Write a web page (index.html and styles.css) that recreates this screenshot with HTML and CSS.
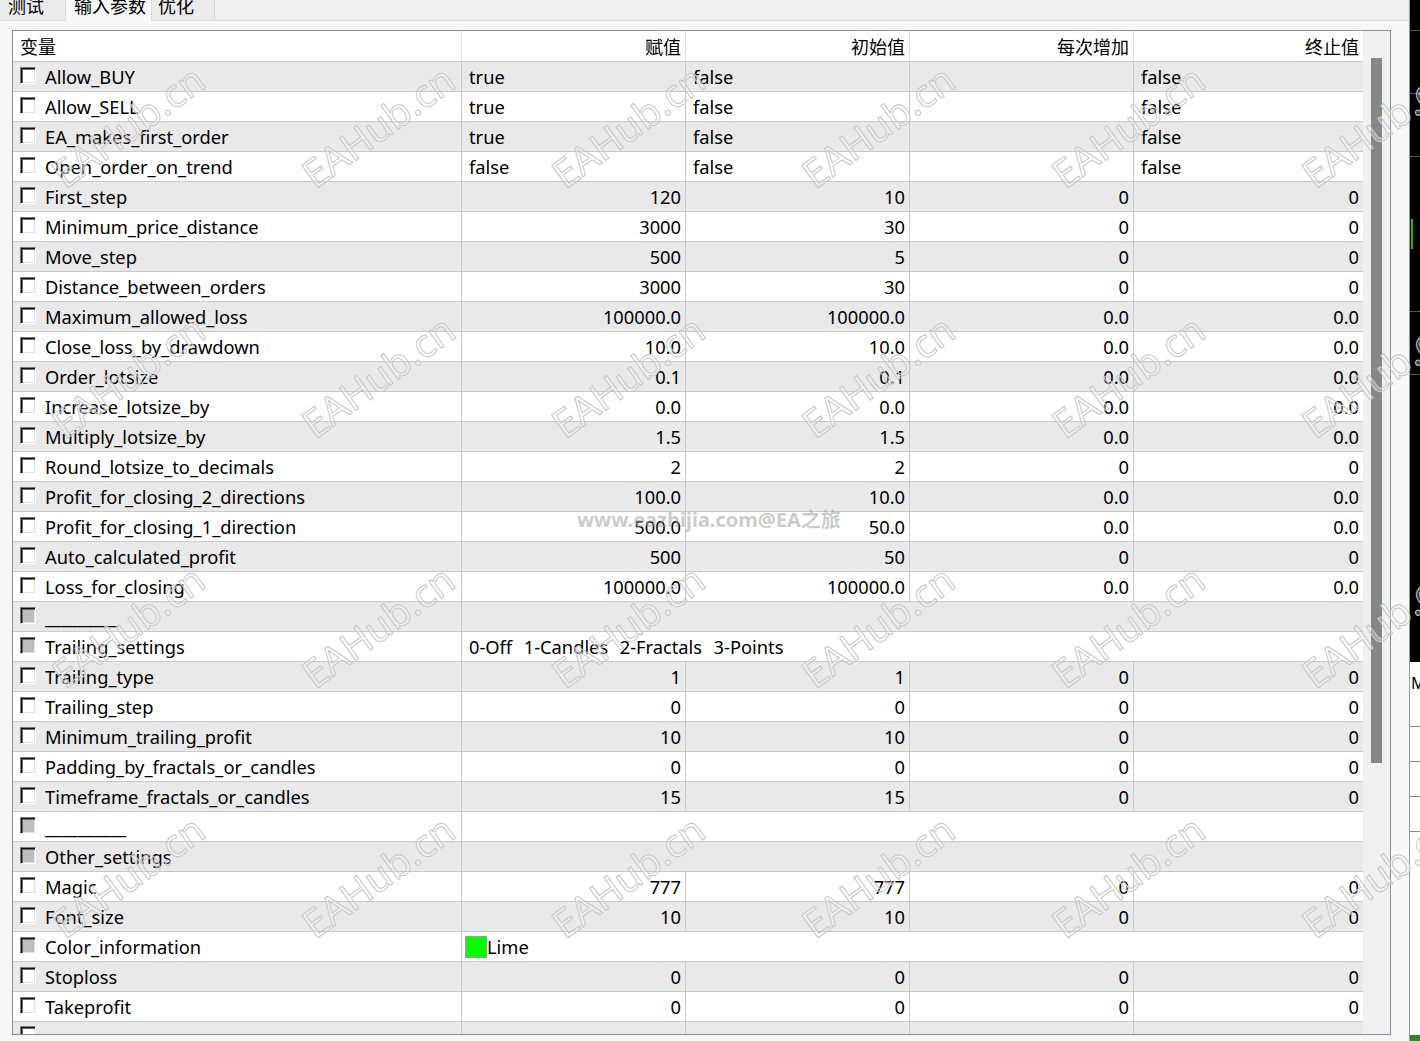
FILE: index.html
```html
<!DOCTYPE html>
<html lang="zh-CN">
<head>
<meta charset="utf-8">
<title>输入参数</title>
<link rel="stylesheet" href="styles.css">
</head>
<body>
<div class="main">
  <div class="tabs">
    <div class="tab tab-test">测试</div>
    <div class="tab tab-inputs active">输入参数</div>
    <div class="tab tab-opt">优化</div>
  </div>
  <div class="panel">
    <div class="listbox">
      <div class="table">
        <div class="row head">
          <div class="cell">变量</div>
          <div class="cell num">赋值</div>
          <div class="cell num">初始值</div>
          <div class="cell num">每次增加</div>
          <div class="cell num last">终止值</div>
        </div>
        <div class="rows">
          <div class="row"><div class="cell name"><span class="cb"></span>Allow_BUY</div><div class="cell">true</div><div class="cell">false</div><div class="cell"></div><div class="cell last">false</div></div>
          <div class="row"><div class="cell name"><span class="cb"></span>Allow_SELL</div><div class="cell">true</div><div class="cell">false</div><div class="cell"></div><div class="cell last">false</div></div>
          <div class="row"><div class="cell name"><span class="cb"></span>EA_makes_first_order</div><div class="cell">true</div><div class="cell">false</div><div class="cell"></div><div class="cell last">false</div></div>
          <div class="row"><div class="cell name"><span class="cb"></span>Open_order_on_trend</div><div class="cell">false</div><div class="cell">false</div><div class="cell"></div><div class="cell last">false</div></div>
          <div class="row"><div class="cell name"><span class="cb"></span>First_step</div><div class="cell num">120</div><div class="cell num">10</div><div class="cell num">0</div><div class="cell num last">0</div></div>
          <div class="row"><div class="cell name"><span class="cb"></span>Minimum_price_distance</div><div class="cell num">3000</div><div class="cell num">30</div><div class="cell num">0</div><div class="cell num last">0</div></div>
          <div class="row"><div class="cell name"><span class="cb"></span>Move_step</div><div class="cell num">500</div><div class="cell num">5</div><div class="cell num">0</div><div class="cell num last">0</div></div>
          <div class="row"><div class="cell name"><span class="cb"></span>Distance_between_orders</div><div class="cell num">3000</div><div class="cell num">30</div><div class="cell num">0</div><div class="cell num last">0</div></div>
          <div class="row"><div class="cell name"><span class="cb"></span>Maximum_allowed_loss</div><div class="cell num">100000.0</div><div class="cell num">100000.0</div><div class="cell num">0.0</div><div class="cell num last">0.0</div></div>
          <div class="row"><div class="cell name"><span class="cb"></span>Close_loss_by_drawdown</div><div class="cell num">10.0</div><div class="cell num">10.0</div><div class="cell num">0.0</div><div class="cell num last">0.0</div></div>
          <div class="row"><div class="cell name"><span class="cb"></span>Order_lotsize</div><div class="cell num">0.1</div><div class="cell num">0.1</div><div class="cell num">0.0</div><div class="cell num last">0.0</div></div>
          <div class="row"><div class="cell name"><span class="cb"></span>Increase_lotsize_by</div><div class="cell num">0.0</div><div class="cell num">0.0</div><div class="cell num">0.0</div><div class="cell num last">0.0</div></div>
          <div class="row"><div class="cell name"><span class="cb"></span>Multiply_lotsize_by</div><div class="cell num">1.5</div><div class="cell num">1.5</div><div class="cell num">0.0</div><div class="cell num last">0.0</div></div>
          <div class="row"><div class="cell name"><span class="cb"></span>Round_lotsize_to_decimals</div><div class="cell num">2</div><div class="cell num">2</div><div class="cell num">0</div><div class="cell num last">0</div></div>
          <div class="row"><div class="cell name"><span class="cb"></span>Profit_for_closing_2_directions</div><div class="cell num">100.0</div><div class="cell num">10.0</div><div class="cell num">0.0</div><div class="cell num last">0.0</div></div>
          <div class="row"><div class="cell name"><span class="cb"></span>Profit_for_closing_1_direction</div><div class="cell num">500.0</div><div class="cell num">50.0</div><div class="cell num">0.0</div><div class="cell num last">0.0</div></div>
          <div class="row"><div class="cell name"><span class="cb"></span>Auto_calculated_profit</div><div class="cell num">500</div><div class="cell num">50</div><div class="cell num">0</div><div class="cell num last">0</div></div>
          <div class="row"><div class="cell name"><span class="cb"></span>Loss_for_closing</div><div class="cell num">100000.0</div><div class="cell num">100000.0</div><div class="cell num">0.0</div><div class="cell num last">0.0</div></div>
          <div class="row text"><div class="cell name"><span class="cb off"></span>_________</div><div class="cell last"></div></div>
          <div class="row text"><div class="cell name"><span class="cb off"></span>Trailing_settings</div><div class="cell last spaced">0-Off&nbsp; 1-Candles&nbsp; 2-Fractals&nbsp; 3-Points</div></div>
          <div class="row"><div class="cell name"><span class="cb"></span>Trailing_type</div><div class="cell num">1</div><div class="cell num">1</div><div class="cell num">0</div><div class="cell num last">0</div></div>
          <div class="row"><div class="cell name"><span class="cb"></span>Trailing_step</div><div class="cell num">0</div><div class="cell num">0</div><div class="cell num">0</div><div class="cell num last">0</div></div>
          <div class="row"><div class="cell name"><span class="cb"></span>Minimum_trailing_profit</div><div class="cell num">10</div><div class="cell num">10</div><div class="cell num">0</div><div class="cell num last">0</div></div>
          <div class="row"><div class="cell name"><span class="cb"></span>Padding_by_fractals_or_candles</div><div class="cell num">0</div><div class="cell num">0</div><div class="cell num">0</div><div class="cell num last">0</div></div>
          <div class="row"><div class="cell name"><span class="cb"></span>Timeframe_fractals_or_candles</div><div class="cell num">15</div><div class="cell num">15</div><div class="cell num">0</div><div class="cell num last">0</div></div>
          <div class="row text"><div class="cell name"><span class="cb off"></span>__________</div><div class="cell last"></div></div>
          <div class="row text"><div class="cell name"><span class="cb off"></span>Other_settings</div><div class="cell last"></div></div>
          <div class="row"><div class="cell name"><span class="cb"></span>Magic</div><div class="cell num">777</div><div class="cell num">777</div><div class="cell num">0</div><div class="cell num last">0</div></div>
          <div class="row"><div class="cell name"><span class="cb"></span>Font_size</div><div class="cell num">10</div><div class="cell num">10</div><div class="cell num">0</div><div class="cell num last">0</div></div>
          <div class="row text"><div class="cell name"><span class="cb off"></span>Color_information</div><div class="cell last color"><span class="swatch"></span>Lime</div></div>
          <div class="row"><div class="cell name"><span class="cb"></span>Stoploss</div><div class="cell num">0</div><div class="cell num">0</div><div class="cell num">0</div><div class="cell num last">0</div></div>
          <div class="row"><div class="cell name"><span class="cb"></span>Takeprofit</div><div class="cell num">0</div><div class="cell num">0</div><div class="cell num">0</div><div class="cell num last">0</div></div>
          <div class="row"><div class="cell name"><span class="cb"></span></div><div class="cell num"></div><div class="cell num"></div><div class="cell num"></div><div class="cell num last"></div></div>
        </div>
      </div>
      <div class="scrollbar"><div class="thumb"></div></div>
    </div>
  </div>
</div>
<div class="chart">
  <div class="chart-dark">
    <span class="grid-line"></span>
    <span class="grid-line"></span>
    <span class="grid-line"></span>
    <span class="wick"></span>
    <span class="grid-line"></span>
    <span class="grid-line"></span>
  </div>
  <div class="chart-light">
    <span class="axis-label">M</span>
    <span class="rule"></span>
    <span class="rule"></span>
    <span class="rule"></span>
    <span class="rule"></span>
  </div>
  <div class="chart-foot"></div>
</div>

<div class="watermarks" aria-hidden="true">
  <div class="wm"><span>EAHub.cn</span></div><div class="wm"><span>EAHub.cn</span></div><div class="wm"><span>EAHub.cn</span></div><div class="wm"><span>EAHub.cn</span></div><div class="wm"><span>EAHub.cn</span></div><div class="wm"><span>EAHub.cn</span></div>
  <div class="wm"><span>EAHub.cn</span></div><div class="wm"><span>EAHub.cn</span></div><div class="wm"><span>EAHub.cn</span></div><div class="wm"><span>EAHub.cn</span></div><div class="wm"><span>EAHub.cn</span></div><div class="wm"><span>EAHub.cn</span></div>
  <div class="wm"><span>EAHub.cn</span></div><div class="wm"><span>EAHub.cn</span></div><div class="wm"><span>EAHub.cn</span></div><div class="wm"><span>EAHub.cn</span></div><div class="wm"><span>EAHub.cn</span></div><div class="wm"><span>EAHub.cn</span></div>
  <div class="wm"><span>EAHub.cn</span></div><div class="wm"><span>EAHub.cn</span></div><div class="wm"><span>EAHub.cn</span></div><div class="wm"><span>EAHub.cn</span></div><div class="wm"><span>EAHub.cn</span></div><div class="wm"><span>EAHub.cn</span></div>
</div>
<div class="site-mark" aria-hidden="true">www.eazhijia.com@EA之旅</div>
</body>
</html>
```

FILE: styles.css
```css
* {
  box-sizing: border-box;
}

html,
body {
  margin: 0;
  padding: 0;
}

body {
  position: relative;
  width: 1420px;
  height: 1041px;
  overflow: hidden;
  display: flex;
  background: #f7f7f7;
  color: #000;
  font-family: "Noto Sans", "Noto Sans CJK SC", sans-serif;
  font-size: 18.3px;
}

/* left part: tab strip + parameter list */
.main {
  width: 1409px;
  display: flex;
  flex-direction: column;
}

.tabs {
  height: 21px;
  display: flex;
  background: #f0f0f0;
  border-bottom: 1px solid #dedede;
}

.tab {
  height: 20px;
  padding-left: 8px;
  line-height: 11px;
  font-size: 18px;
  background: #ebebeb;
  border-right: 1px solid #d9d9d9;
  font-family: "Noto Sans CJK SC", sans-serif;
}

.tab-test { width: 66px; }
.tab-inputs { width: 86px; }
.tab-opt { width: 63px; padding-left: 6px; }

.tab.active {
  height: 21px;
  background: #f7f7f7;
  position: relative;
  z-index: 1;
}

.panel {
  flex: 1;
  padding: 9px 18px 6px 12px;
}

.listbox {
  width: 1379px;
  height: 1005px;
  display: flex;
  border: 1px solid #8b8e96;
  background: #fff;
  overflow: hidden;
}

.table {
  width: 1350px;
  flex: none;
}

.row {
  display: grid;
  grid-template-columns: 449px 224px 224px 224px 229px;
  height: 30px;
  border-bottom: 1px solid #cacaca;
}

.row.head {
  height: 31px;
  background: #fff;
  font-family: "Noto Sans CJK SC", sans-serif;
  font-size: 18px;
}

.row.head .cell {
  line-height: 30px;
  border-right-color: #e2e2e2;
}

.row.text {
  grid-template-columns: 449px 901px;
}

.rows .row:nth-child(odd) {
  background: #e9e9e9;
}

.rows .row:nth-child(even) {
  background: #fff;
}

.cell {
  padding: 0 4px 0 7px;
  line-height: 30px;
  white-space: nowrap;
  border-right: 1px solid #cacaca;
}

.cell.last {
  border-right: none;
}

.cell.num {
  text-align: right;
}

.cell.spaced {
  word-spacing: 1px;
}

.cell.name {
  display: flex;
  align-items: center;
  gap: 9px;
}

/* sunken classic checkbox */
.cb {
  flex: none;
  width: 16px;
  height: 17px;
  margin-top: -4px;
  background: #fff;
  border-style: solid;
  border-width: 1px;
  border-color: #7a7a7a #fdfdfd #fdfdfd #7a7a7a;
  box-shadow: inset 1px 1px 0 #101010, inset 2px 2px 0 #6a6a6a, inset -1px -1px 0 #e3e3e3;
}

.cb.off {
  background: #bdbdbd;
}

.cell.color {
  display: flex;
  align-items: center;
  padding-left: 3px;
}

.swatch {
  width: 22px;
  height: 22px;
  margin-top: -1px;
  background: #00ff00;
  border: 1px solid #9c9c9c;
}

.scrollbar {
  width: 27px;
  flex: none;
  background: #f0f0f0;
  padding: 27px 0 0 8px;
}

.thumb {
  width: 11px;
  height: 705px;
  background: #878787;
}

/* sliver of the chart window on the right */
.chart {
  width: 11px;
  display: flex;
  flex-direction: column;
  border-left: 1px solid #9a9a9a;
}

.chart-dark {
  height: 662px;
  background: #000;
  display: flex;
  flex-direction: column;
  gap: 62px;
  padding-top: 30px;
}

.grid-line {
  height: 1px;
  border-top: 1px dashed #5a6470;
}

.wick {
  width: 2px;
  height: 30px;
  margin-left: 1px;
  background: #00c800;
}

.chart-light {
  flex: 1;
  background: #fff;
  display: flex;
  flex-direction: column;
  gap: 34px;
  padding-top: 12px;
}

.axis-label {
  font-size: 16px;
  line-height: 18px;
  padding-left: 1px;
  color: #000;
}

.rule {
  height: 1px;
  background: #8a8a8a;
}

.chart-foot {
  height: 6px;
  background: #2c8a2c;
}

/* watermark layer over the whole window */
.watermarks {
  position: absolute;
  top: 0;
  left: 2px;
  display: grid;
  grid-template-columns: repeat(6, 250px);
  grid-auto-rows: 250px;
  pointer-events: none;
}

.wm {
  display: flex;
  align-items: center;
  justify-content: center;
}

.wm span {
  display: block;
  transform: rotate(-36deg);
  font-family: "Noto Sans", sans-serif;
  font-size: 39px;
  line-height: 1;
  color: rgba(255, 255, 255, 0.25);
  -webkit-text-stroke: 1px #c8c8c8;
  white-space: nowrap;
}

.site-mark {
  position: absolute;
  left: 577px;
  top: 507px;
  font-family: "Noto Sans", "Noto Sans CJK SC", sans-serif;
  font-weight: 700;
  font-size: 20px;
  line-height: 26px;
  color: rgba(160, 160, 160, 0.55);
  white-space: nowrap;
  pointer-events: none;
}
```
